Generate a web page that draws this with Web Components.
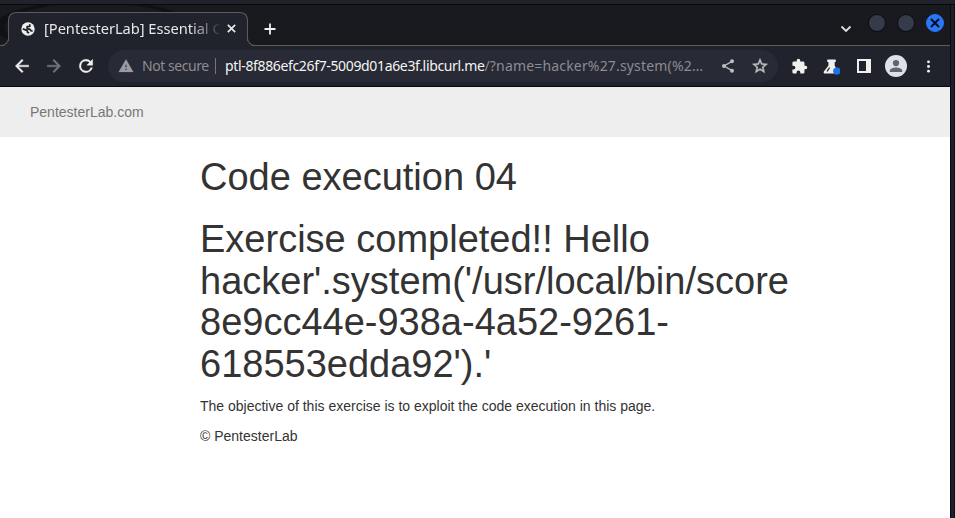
<!DOCTYPE html>
<html lang="en"><head><meta charset="utf-8"><title>Code execution 04</title>
<style>html,body{margin:0;height:100%;overflow:hidden;background:#20222c}</style></head>
<body><browser-window></browser-window>
<script>
const define = (name, html) => {
  const t = document.createElement('template');
  t.innerHTML = html;
  customElements.define(name, class extends HTMLElement {
    constructor() { super(); this.attachShadow({mode:'open'}).append(t.content.cloneNode(true)); }
  });
};

const ICONS = {
  globe: '<circle cx="12" cy="12" r="11.500" fill="#f0f0ee"/><path d="M15 4v3.500L10.500 8v3.500l5 1L17 15l3 .5M3 11.500l4.500 2 3.500 1.500v2.500l3 1.500" fill="none" stroke="#20222c" stroke-width="3" stroke-linejoin="round"/>',
  close: '<path d="M4 4l16 16M20 4L4 20" stroke="currentColor" stroke-width="3.700" fill="none"/>',
  plus: '<path d="M12 1v22M1 12h22" stroke="currentColor" stroke-width="3.600" fill="none"/>',
  back: '<path fill="currentColor" d="M20 11H7.830l5.590-5.590L12 4l-8 8 8 8 1.410-1.410L7.830 13H20z" stroke="currentColor" stroke-width=".5"/>',
  forward: '<path fill="currentColor" d="M12 4l-1.410 1.410L16.170 11H4v2h12.170l-5.580 5.590L12 20l8-8z" stroke="currentColor" stroke-width=".5"/>',
  reload: '<path fill="currentColor" stroke="currentColor" stroke-width=".5" d="M17.650 6.350A7.960 7.960 0 0 0 12 4a8 8 0 1 0 7.730 10h-2.080A6 6 0 1 1 12 6c1.660 0 3.140.69 4.220 1.780L13 11h7V4z"/>',
  warn: '<path fill="currentColor" fill-rule="evenodd" d="M1 21h22L12 2zm12-3h-2v-2h2zm0-4h-2v-4h2z" stroke="currentColor" stroke-width=".3"/>',
  share: '<path d="M18 5L6 12l12 7" fill="none" stroke="currentColor" stroke-width="2"/><g fill="currentColor"><circle cx="18" cy="5" r="3"/><circle cx="6" cy="12" r="3"/><circle cx="18" cy="19" r="3"/></g>',
  star: '<path fill="currentColor" stroke="currentColor" stroke-width=".7" d="M22 9.240l-7.190-.62L12 2 9.190 8.630 2 9.240l5.460 4.730L5.820 21 12 17.270 18.180 21l-1.630-7.030zM12 15.400l-3.760 2.270 1-4.280-3.320-2.880 4.380-.38L12 6.100l1.710 4.040 4.380.38-3.320 2.880 1 4.280z"/>',
  puzzle: '<path fill="currentColor" d="M20.500 11H19V7a2 2 0 0 0-2-2h-4V3.500a2.500 2.500 0 0 0-5 0V5H4a2 2 0 0 0-2 2v3.800h1.500a2.700 2.700 0 0 1 0 5.400H2V20a2 2 0 0 0 2 2h3.800v-1.500a2.700 2.700 0 0 1 5.400 0V22H17a2 2 0 0 0 2-2v-4h1.500a2.500 2.500 0 0 0 0-5z"/>',
  flask: '<path fill="currentColor" d="M6 2h12v3.500h-1.500V11l5 8q.8 3-1.700 3H3q-3 0-1.800-3l6.500-8.500v-5H6z"/><path stroke="#20222c" stroke-width="1.700" d="M9.300 13.500l-3.600 5.300"/><circle cx="19.500" cy="18.500" r="5.200" fill="#1a73e8"/>',
  panel: '<path fill="currentColor" fill-rule="evenodd" d="M0 0h24v24H0zm3.400 3.400v17.200H15.400V3.400z"/>',
  person: '<circle cx="12" cy="12" r="12" fill="#dfe1e6"/><circle cx="12" cy="8.800" r="3.400" fill="#5b6577"/><path fill="#5b6577" d="M5.200 18.500v-1.400c0-2.300 4.500-3.500 6.800-3.500s6.800 1.200 6.800 3.500v1.400z"/>',
  dots: '<g fill="currentColor"><circle cx="12" cy="3.400" r="2.700"/><circle cx="12" cy="12" r="2.700"/><circle cx="12" cy="20.600" r="2.700"/></g>',
  chevron: '<path d="M3 7l9 9 9-9" fill="none" stroke="currentColor" stroke-width="3.700"/>'
};
customElements.define('ui-icon', class extends HTMLElement {
  connectedCallback() {
    if (this.shadowRoot) return;
    const s = this.getAttribute('size') || 18;
    this.attachShadow({mode:'open'}).innerHTML =
      `<style>:host{display:block;flex:none;width:${s}px;height:${s}px}svg{display:block}</style>
       <svg width="${s}" height="${s}" viewBox="0 0 24 24">${ICONS[this.getAttribute('name')]}</svg>`;
  }
});

define('browser-tab', `<style>
:host{display:flex;align-items:center;box-sizing:border-box;width:240px;height:34px;margin-left:8px;padding:0 9px 2px 12px;position:relative;z-index:1;
 background:#20222c;border:1px solid #5b5c60;border-bottom:0;border-radius:8px 8px 0 0;color:#e8e8e6;font:14.670px/20px "Noto Sans",sans-serif}
:host::before,:host::after{content:"";position:absolute;bottom:0;width:8px;height:8px;box-sizing:border-box;border:solid #5b5c60;border-width:0 1px 1px 0;border-radius:0 0 8px 0;box-shadow:3px 3px 0 #20222c;clip-path:inset(0 -1px 0 0)}
:host::before{left:-8px}:host::after{right:-8px;border-width:0 0 1px 1px;border-radius:0 0 0 8px;box-shadow:-3px 3px 0 #20222c;clip-path:inset(0 0 0 -1px)}
.t{width:175px;margin-left:9px;margin-top:-2px;letter-spacing:-.03px;overflow:hidden;white-space:nowrap;-webkit-mask-image:linear-gradient(90deg,#000 145px,transparent 178px)}
.c{margin-left:7px}</style>
<ui-icon name="globe" size="14"></ui-icon><div class="t"><slot></slot></div><ui-icon class="c" name="close" size="11"></ui-icon>`);

define('window-buttons', `<style>
:host{display:flex;gap:11px;align-items:center}
i{box-sizing:border-box;width:18px;height:18px;border-radius:50%;background:#353b48;border:1px solid #090b10}
.x{background:#2777f7;border-color:#2777f7;color:#080b15;display:grid;place-items:center}</style>
<i></i><i></i><i class="x"><ui-icon name="close" size="12"></ui-icon></i>`);

define('tab-strip', `<style>
:host{display:flex;height:41px;box-sizing:border-box;padding-top:7px;border-bottom:1px solid #5b5c60;position:relative;
background:radial-gradient(ellipse 100px 27px at 94px 22px,transparent 88%,#101116 90%,#101116 98%,transparent 100%),linear-gradient(#191a20,#17191d)}
.p{margin:11px 0 0 16px;color:#f0f0ee}.v{margin:11px 16px 0 auto;color:#dededc}
window-buttons{margin:2px 6px 0 0;height:18px}</style>
<browser-tab>[PentesterLab] Essential Code</browser-tab><ui-icon class="p" name="plus" size="12"></ui-icon>
<ui-icon class="v" name="chevron" size="12"></ui-icon><window-buttons></window-buttons>`);

define('address-bar', `<style>
:host{display:flex;align-items:center;box-sizing:border-box;width:670px;height:32px;padding:0 9px 0 10px;border-radius:16px;background:#282a35;color:#8b8d92;font:14px/20px "Noto Sans",sans-serif;white-space:nowrap}
.n{width:67px;margin-left:8px;letter-spacing:-.45px}.s{width:1px;height:16px;background:#74767c;margin:0 9px 0 6px}
.u{width:478px;flex:none;letter-spacing:.17px}b{font-weight:400;color:#f4f4f2;letter-spacing:-.35px}
ui-icon{color:#bcbdbe}.w{color:#9a9ca3}.h{margin-left:auto;margin-right:15px}</style>
<ui-icon class="w" name="warn" size="16"></ui-icon><span class="n">Not secure</span><span class="s"></span>
<span class="u"><b>ptl-8f886efc26f7-5009d01a6e3f.libcurl.me</b>/?name=hacker%27.system(%2…</span>
<ui-icon class="h" name="share" size="16"></ui-icon><ui-icon name="star" size="18"></ui-icon>`);

define('tool-bar', `<style>
:host{display:flex;align-items:center;height:40px;padding-left:12px;background:#20222c;border-bottom:1px solid #08090d;color:#f0f0ee}
.nav{display:flex;gap:12px;margin-right:12px}.f{color:#74757a}
.a{display:flex;align-items:center;margin-left:13px;gap:15px}.l{margin-left:2px}.m{margin-left:-1px}</style>
<div class="nav"><ui-icon name="back" size="20"></ui-icon><ui-icon class="f" name="forward" size="20"></ui-icon><ui-icon name="reload" size="20"></ui-icon></div>
<address-bar></address-bar>
<div class="a"><ui-icon name="puzzle" size="17"></ui-icon><ui-icon name="flask" size="17"></ui-icon><ui-icon class="l" name="panel" size="14"></ui-icon><ui-icon class="m" name="person" size="22"></ui-icon><ui-icon name="dots" size="13"></ui-icon></div>`);

define('lab-page', `<style>
:host{display:block;flex:1;background:#fff;color:#333;font:14px/20px "Liberation Sans",Arial,sans-serif;overflow:hidden}
nav{height:50px;box-sizing:border-box;padding:15px 30px;background:#eee;color:#777}
main{width:600px;margin-left:200px}
h1{font-size:38px;font-weight:500;line-height:1.1;margin:20px 0}h1+h1{margin-bottom:10px}p{margin:0 0 10px}</style>
<nav>PentesterLab.com</nav><main><h1>Code execution 04</h1>
<h1>Exercise completed!! Hello<br>hacker'.system('/usr/local/bin/score<br>8e9cc44e-938a-4a52-9261-<br>618553edda92').'</h1>
<p>The objective of this exercise is to exploit the code execution in this page.</p><p>© PentesterLab</p></main>`);

define('browser-window', `<style>
:host{display:flex;flex-direction:column;box-sizing:border-box;width:955px;height:518px;padding-right:5px;
background:linear-gradient(90deg,transparent 950px,#090b10 950px 951px,#1d202a 951px 954px,#0b0d12 954px)}
.top{height:5px;box-sizing:border-box;margin-right:-5px;background:#20222c;border-bottom:1px solid #08090d}</style>
<div class="top"></div><tab-strip></tab-strip><tool-bar></tool-bar><lab-page></lab-page>`);
</script></body></html>
